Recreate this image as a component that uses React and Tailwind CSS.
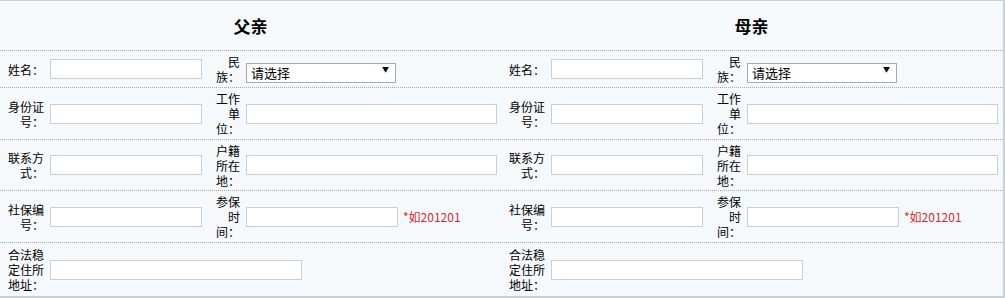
import React from "react";

const font = { fontFamily: '"Noto Sans CJK SC", "Liberation Sans", sans-serif' };

function Label({ text, wide }) {
  return (
    <div className={`flex items-center justify-end shrink-0 ${wide ? "w-[48px] pl-[8px] pr-[4px]" : "w-[34px] pl-[6px] pr-[4px]"}`}>
      <span className={`block text-right text-[12px] leading-[15px] text-black ${wide ? "w-[36px]" : "w-[24px]"}`}>{text}</span>
    </div>
  );
}

function Input({ w }) {
  return <input className={`h-[20px] ${w} border border-[#c4cfd7] bg-white outline-none`} />;
}

function Select() {
  return (
    <div className="relative w-[150px] h-[20px]">
      <select className="appearance-none w-full h-full border border-[#a4abb1] bg-white pl-[4px] text-[13px] leading-[18px] text-black outline-none">
        <option>请选择</option>
      </select>
      <span className="absolute right-[7px] top-[5px] text-[7px] leading-[10px] text-black pointer-events-none">▼</span>
    </div>
  );
}

function Hint() {
  return <span className="ml-[5px] text-[12px] text-[#e0262c]">*如201201</span>;
}

function Half({ row }) {
  if (row.full) {
    return (
      <div className="flex w-[501px] h-full items-center">
        <Label text={row.l1} wide />
        <div className="pl-[2px] flex items-center">
          <Input w="w-[252px]" />
        </div>
      </div>
    );
  }
  return (
    <div className="flex w-[501px] h-full items-center">
      <Label text={row.l1} wide />
      <div className="w-[162px] pl-[2px] flex items-center shrink-0">
        <Input w="w-[152px]" />
      </div>
      <Label text={row.l2} />
      <div className="pl-[2px] flex items-center">
        {row.select ? <Select /> : <Input w={row.hint ? "w-[152px]" : "w-[251px]"} />}
        {row.hint && <Hint />}
      </div>
    </div>
  );
}

const rows = [
  { l1: "姓名：", l2: "民族：", select: true, h: "h-[37px]" },
  { l1: "身份证号：", l2: "工作单位：", h: "h-[52px]" },
  { l1: "联系方式：", l2: "户籍所在地：", h: "h-[51px]" },
  { l1: "社保编号：", l2: "参保时间：", hint: true, h: "h-[52px]" },
  { l1: "合法稳定住所地址：", full: true, h: "h-[53px]", last: true },
];

export default function App() {
  return (
    <div style={font} className="w-[1005px] h-[298px] bg-[#f5f9fc] border-t border-r-2 border-b-2 border-[#c7d1d9]">
      <div className="flex h-[50px] border-b border-dotted border-[#a9a9a9]">
        <div className="w-[501px] flex items-center justify-center text-[17px] font-bold text-black">父亲</div>
        <div className="w-[501px] flex items-center justify-center text-[17px] font-bold text-black">母亲</div>
      </div>
      {rows.map((row, i) => (
        <div key={i} className={`flex ${row.h} ${row.last ? "" : "border-b border-dotted border-[#a9a9a9]"}`}>
          <Half row={row} />
          <Half row={row} />
        </div>
      ))}
    </div>
  );
}
